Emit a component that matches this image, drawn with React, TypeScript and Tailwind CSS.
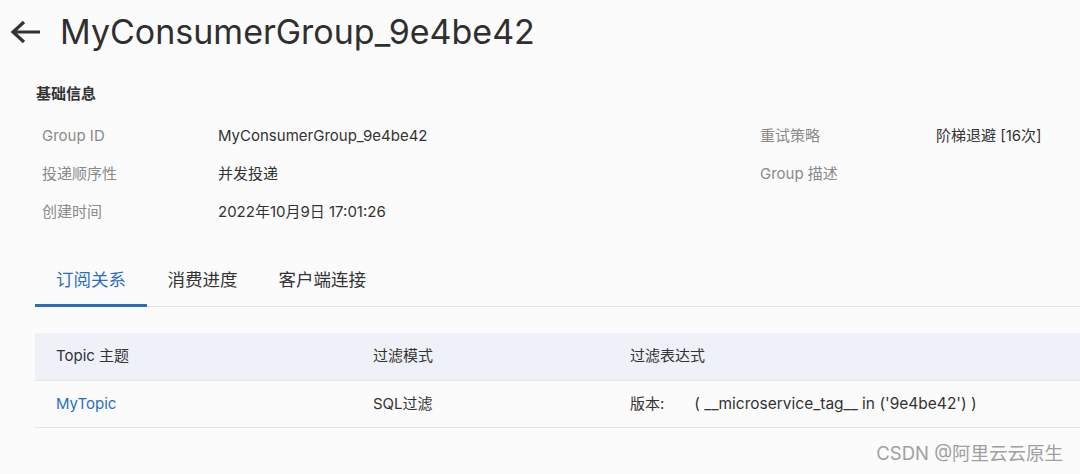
import React from "react";

const font = { fontFamily: 'Inter, "Noto Sans CJK SC", sans-serif' };

function InfoRow({ label, value }: { label: string; value?: string }) {
  return (
    <div className="flex h-[38px] items-center">
      <div className="w-[182px] pl-[6px] text-[15px] text-[#8a8a8a]">{label}</div>
      <div className="text-[15px] text-[#333]">{value}</div>
    </div>
  );
}

export default function App() {
  return (
    <div className="relative h-[474px] w-[1080px] overflow-hidden bg-[#fbfbfb]" style={font}>
      <div className="flex h-[64px] items-center pl-[10px]">
        <svg width="32" height="24" viewBox="0 0 32 24" className="text-[#333]">
          <path d="M30 12H4M14 2L3 12l11 10" fill="none" stroke="currentColor" strokeWidth="3.2" strokeLinecap="butt" />
        </svg>
        <h1 className="ml-[18px] text-[34px] leading-none text-[#2f2f2f]">MyConsumerGroup_9e4be42</h1>
      </div>
      <div className="pl-[36px] pt-[19px] text-[15px] font-bold text-[#333]">基础信息</div>
      <div className="mt-[12px] flex pl-[36px]">
        <div className="w-[718px]">
          <InfoRow label="Group ID" value="MyConsumerGroup_9e4be42" />
          <InfoRow label="投递顺序性" value="并发投递" />
          <InfoRow label="创建时间" value="2022年10月9日 17:01:26" />
        </div>
        <div className="flex-1">
          <InfoRow label="重试策略" value="阶梯退避 [16次]" />
          <InfoRow label="Group 描述" />
        </div>
      </div>
      <div className="ml-[35px] mt-[35px] flex border-b border-[#e3e3e3]">
        <div className="-mb-px border-b-[3px] border-[#2a6ec2] px-[21px] pb-[11px] text-[17.5px] text-[#2a6ec2]">订阅关系</div>
        <div className="px-[20.5px] pb-[11px] text-[17.5px] text-[#333]">消费进度</div>
        <div className="px-[20.5px] pb-[11px] text-[17.5px] text-[#333]">客户端连接</div>
      </div>
      <div className="ml-[35px] mt-[26px]">
        <div className="flex h-[48px] items-center border-b border-[#e3e5ea] bg-[#eef1f8] text-[15px] text-[#333]">
          <div className="w-[317px] pl-[21px]">Topic 主题</div>
          <div className="w-[257px] pl-[21px]">过滤模式</div>
          <div className="pl-[21px]">过滤表达式</div>
        </div>
        <div className="flex h-[47px] items-center border-b border-[#e3e3e3] text-[15px] text-[#333]">
          <div className="w-[317px] pl-[21px] text-[#2a6ec2]">MyTopic</div>
          <div className="w-[257px] pl-[21px]">SQL过滤</div>
          <div className="pl-[21px]">
            版本:<span className="ml-[30px] text-[15.5px]">( __microservice_tag__ in ('9e4be42') )</span>
          </div>
        </div>
      </div>
      <div className="absolute bottom-[6px] right-[17px] text-[18.5px] text-[#a0a0a0]">CSDN @阿里云云原生</div>
    </div>
  );
}
